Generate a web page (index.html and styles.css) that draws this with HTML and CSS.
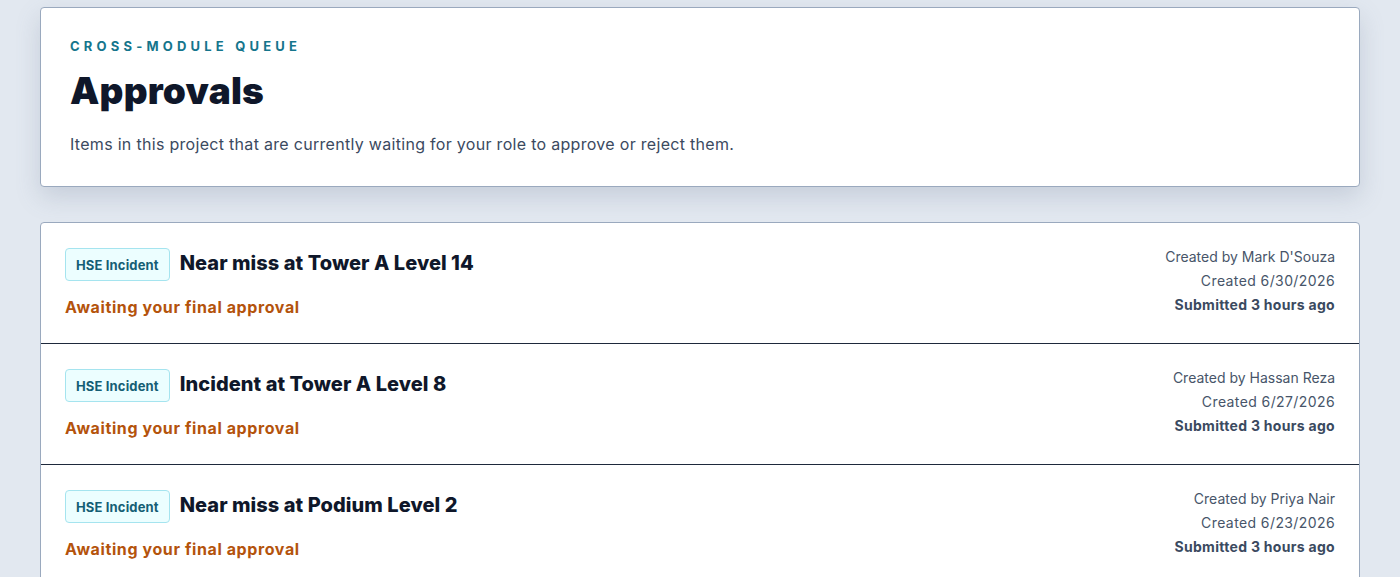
FILE: index.html
```html
<!DOCTYPE html>
<html lang="en">
<head>
<meta charset="utf-8">
<title>Approvals</title>
<link rel="stylesheet" href="styles.css">
</head>
<body>
<main class="page">
  <section class="hero">
    <p class="eyebrow">Cross-module queue</p>
    <h1 class="title">Approvals</h1>
    <p class="lead">Items in this project that are currently waiting for your role to approve or reject them.</p>
  </section>

  <section class="list">
    <article class="row">
      <div class="main">
        <div class="head">
          <span class="badge">HSE Incident</span>
          <h2 class="name">Near miss at Tower A Level 14</h2>
        </div>
        <p class="status">Awaiting your final approval</p>
      </div>
      <div class="meta">
        <span>Created by Mark D'Souza</span>
        <span class="date">Created 6/30/2026</span>
        <span class="strong">Submitted 3 hours ago</span>
      </div>
    </article>
    <article class="row">
      <div class="main">
        <div class="head">
          <span class="badge">HSE Incident</span>
          <h2 class="name">Incident at Tower A Level 8</h2>
        </div>
        <p class="status">Awaiting your final approval</p>
      </div>
      <div class="meta">
        <span>Created by Hassan Reza</span>
        <span class="date">Created 6/27/2026</span>
        <span class="strong">Submitted 3 hours ago</span>
      </div>
    </article>
    <article class="row">
      <div class="main">
        <div class="head">
          <span class="badge">HSE Incident</span>
          <h2 class="name">Near miss at Podium Level 2</h2>
        </div>
        <p class="status">Awaiting your final approval</p>
      </div>
      <div class="meta">
        <span>Created by Priya Nair</span>
        <span class="date">Created 6/23/2026</span>
        <span class="strong">Submitted 3 hours ago</span>
      </div>
    </article>
  </section>
</main>
</body>
</html>
```

FILE: styles.css
```css
* { box-sizing: border-box; }

html, body {
  margin: 0;
  padding: 0;
  background: #e2e8f0;
  font-family: "Inter", "Noto Sans", "Liberation Sans", sans-serif;
  color: #0f172a;
}

.page {
  padding: 7px 40px 40px;
  display: flex;
  flex-direction: column;
  gap: 35px;
}

.hero {
  background: #ffffff;
  border: 1px solid #9aa9be;
  border-radius: 4px;
  padding: 29px 29px 30px;
  box-shadow: 0 10px 24px rgba(100, 116, 139, 0.22);
}

.eyebrow {
  margin: 0;
  font-size: 13px;
  line-height: 18px;
  font-weight: 700;
  letter-spacing: 4.2px;
  text-transform: uppercase;
  color: #15758c;
}

.title {
  margin: 14px 0 0;
  font-size: 37px;
  line-height: 44px;
  font-weight: 900;
  letter-spacing: 0.2px;
  color: #0f172a;
}

.lead {
  margin: 19px 0 0;
  font-size: 16px;
  line-height: 24px;
  letter-spacing: 0.3px;
  color: #3b4a5f;
}

.list {
  background: #ffffff;
  border: 1px solid #9aa9be;
  border-radius: 4px;
  display: flex;
  flex-direction: column;
}

.row {
  display: flex;
  justify-content: space-between;
  align-items: center;
  padding: 25px 24px 24px 24px;
  border-bottom: 1px solid #1e293b;
}

.main {
  display: flex;
  flex-direction: column;
  gap: 14px;
}

.head {
  display: flex;
  align-items: flex-start;
  gap: 10px;
}

.badge {
  display: inline-flex;
  align-items: center;
  height: 33px;
  padding: 0 10px;
  font-size: 13px;
  font-weight: 700;
  letter-spacing: 0.15px;
  color: #155e75;
  background: #ecfeff;
  border: 1px solid #a5e4ef;
  border-radius: 4px;
}

.name {
  margin: 0;
  font-size: 20px;
  line-height: 30px;
  font-weight: 800;
  letter-spacing: 0.05px;
  color: #0f172a;
}

.status {
  margin: 0;
  font-size: 16px;
  line-height: 24px;
  font-weight: 700;
  letter-spacing: 0.6px;
  color: #b4530c;
}

.meta {
  display: flex;
  flex-direction: column;
  align-items: flex-end;
  font-size: 14px;
  line-height: 24px;
  color: #475569;
  margin-top: -5px;
}

.meta .date {
  letter-spacing: 0.4px;
}

.meta .strong {
  font-weight: 700;
  letter-spacing: 0.3px;
  color: #3b4a5f;
}
```
